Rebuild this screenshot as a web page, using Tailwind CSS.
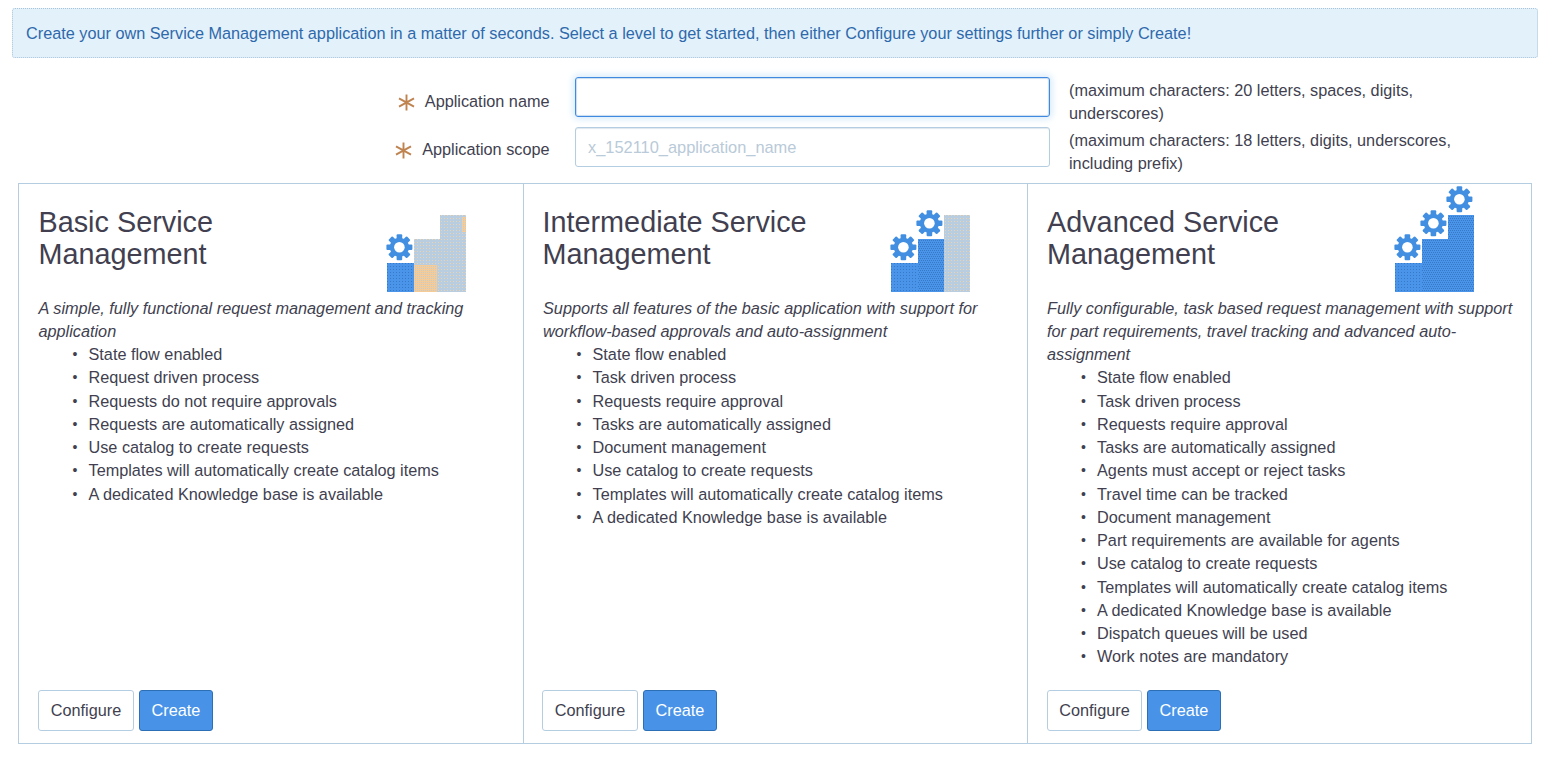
<!DOCTYPE html>
<html lang="en">
<head>
<meta charset="utf-8">
<title>Create Service Management Application</title>
<script src="https://cdn.jsdelivr.net/npm/@tailwindcss/browser@4"></script>
</head>
<body class="h-[759px] overflow-hidden bg-white pt-2 font-['Liberation_Sans',Arial,sans-serif] text-[16.25px] leading-[23.25px] text-[#413f50]">
<svg class="absolute size-0">
  <defs>
    <pattern id="blue" width="3" height="3" patternUnits="userSpaceOnUse"><rect width="3" height="3" fill="#4a94e9"/><rect x="1" y="1" width="1" height="1" fill="#3679c6"/></pattern>
    <pattern id="blue2" width="2" height="4" patternUnits="userSpaceOnUse"><rect width="2" height="4" fill="#4a94e9"/><rect width="1" height="1" fill="#3679c6"/><rect x="1" y="2" width="1" height="1" fill="#3679c6"/></pattern>
    <pattern id="gray" width="3" height="3" patternUnits="userSpaceOnUse"><rect width="3" height="3" fill="#b8cee0"/><rect x="1" y="1" width="1" height="1" fill="#e8d3b4"/></pattern>
    <pattern id="tan" width="2" height="2" patternUnits="userSpaceOnUse"><rect width="2" height="2" fill="#f6cb96"/><rect width="1" height="1" fill="#c8ccc8"/></pattern>
    <g id="gear">
      <g fill="#428fe2">
        <rect id="tooth" x="-2.8" y="-13" width="5.6" height="26" rx="1"/>
        <use href="#tooth" transform="rotate(45)"/>
        <use href="#tooth" transform="rotate(90)"/>
        <use href="#tooth" transform="rotate(135)"/>
        <circle r="9.6"/>
      </g>
      <circle r="5.3" fill="#fff"/>
    </g>
  </defs>
</svg>

<div class="mr-[7px] ml-3 flex h-[50px] items-center rounded-[3px] border border-dotted border-[#a9c3da] bg-[#e3f1fb] pt-[2px] pl-[13px] text-[#2e69ab]">Create your own Service Management application in a matter of seconds. Select a level to get started, then either Configure your settings further or simply Create!</div>

<form class="mt-[19px] flex flex-col gap-[10px]">
  <div class="flex h-10">
    <label class="mt-[13px] flex h-6 w-[549.5px] items-center justify-end gap-[10px]">
      <svg class="size-[17px]" viewBox="-8.5 -8.5 17 17" stroke="#bf8350" stroke-width="1.9"><path d="M0-8V8M-7.5-4.2L7.5 4.2M-7.5 4.2L7.5-4.2"/></svg>Application name
    </label>
    <input class="ml-[25.5px] h-10 w-[475px] rounded-[3px] border border-[#3f8ae0] px-3 shadow-[0_0_7px_2px_#d5eafa,inset_0_0_1px_1px_#c9ddef] outline-none">
    <p class="ml-[19px] mt-[2px] w-[400px]">(maximum characters: 20 letters, spaces, digits, underscores)</p>
  </div>
  <div class="flex h-10">
    <label class="mt-[11px] flex h-6 w-[549.5px] items-center justify-end gap-[10px]">
      <svg class="size-[17px]" viewBox="-8.5 -8.5 17 17" stroke="#bf8350" stroke-width="1.9"><path d="M0-8V8M-7.5-4.2L7.5 4.2M-7.5 4.2L7.5-4.2"/></svg>Application scope
    </label>
    <input placeholder="x_152110_application_name" class="ml-[25.5px] h-10 w-[475px] rounded-[3px] border border-[#b5cde0] px-3 text-[16.4px] shadow-[inset_0_1px_1px_#dfe8ee] outline-none placeholder:text-[#b9cad8]">
    <p class="ml-[19px] mt-[2px] w-[400px]">(maximum characters: 18 letters, digits, underscores, including prefix)</p>
  </div>
</form>

<main class="mt-4 ml-[18px] grid h-[561px] w-[1514px] grid-cols-[505px_504px_1fr] border border-[#b5cde0]">
  <section class="flex flex-col border-r border-[#b5cde0] pr-[14px] pb-3 pl-[19px]">
    <header class="flex h-[109px] justify-between pr-[42px]">
      <h2 class="pt-[22px] pl-[0.5px] text-[28.8px] leading-8">Basic Service<br>Management</h2>
      <svg class="h-[109px] w-[84px]" viewBox="0 0 84 109">
        <path fill="url(#blue)" d="M4 79h27v29H4z"/><path fill="url(#gray)" d="M31 55h26V31h26v77H31z"/><path fill="url(#tan)" d="M31 81h23v27H31zM79 33h4v15h-4z"/>
        <use href="#gear" x="16.4" y="63.3"/>
      </svg>
    </header>
    <p class="mt-[3.5px] pl-[0.5px] italic">A simple, fully functional request management and tracking application</p>
    <ul class="list-none pl-[34.5px] [&>li]:flex [&>li]:before:w-4 [&>li]:before:text-[14px] [&>li]:before:content-['•']">
      <li>State flow enabled</li><li>Request driven process</li><li>Requests do not require approvals</li><li>Requests are automatically assigned</li><li>Use catalog to create requests</li><li>Templates will automatically create catalog items</li><li>A dedicated Knowledge base is available</li>
    </ul>
    <div class="mt-auto flex gap-[5px]"><button type="button" class="h-[41px] w-24 rounded-[3px] border border-[#b5cde0]">Configure</button><button type="button" class="h-[41px] w-[74px] rounded-[3px] border border-[#2d6fb5] bg-[#4893e8] text-white">Create</button></div>
  </section>

  <section class="flex flex-col border-r border-[#b5cde0] pr-[14px] pb-3 pl-[18px]">
    <header class="flex h-[109px] justify-between pr-[42px]">
      <h2 class="pt-[22px] pl-[0.5px] text-[28.8px] leading-8">Intermediate Service<br>Management</h2>
      <svg class="h-[109px] w-[84px]" viewBox="0 0 84 109">
        <path fill="url(#blue)" d="M4 79h27v29H4z"/><path fill="url(#blue2)" d="M31 55h26v53H31z"/><path fill="url(#gray)" d="M57 31h26v77H57z"/>
        <use href="#gear" x="16.4" y="63.3"/><use href="#gear" x="42.4" y="39.3"/>
      </svg>
    </header>
    <p class="mt-[3.5px] pl-px italic">Supports all features of the basic application with support for workflow-based approvals and auto-assignment</p>
    <ul class="list-none pl-[34.5px] [&>li]:flex [&>li]:before:w-4 [&>li]:before:text-[14px] [&>li]:before:content-['•']">
      <li>State flow enabled</li><li>Task driven process</li><li>Requests require approval</li><li>Tasks are automatically assigned</li><li>Document management</li><li>Use catalog to create requests</li><li>Templates will automatically create catalog items</li><li>A dedicated Knowledge base is available</li>
    </ul>
    <div class="mt-auto flex gap-[5px]"><button type="button" class="h-[41px] w-24 rounded-[3px] border border-[#b5cde0]">Configure</button><button type="button" class="h-[41px] w-[74px] rounded-[3px] border border-[#2d6fb5] bg-[#4893e8] text-white">Create</button></div>
  </section>

  <section class="flex flex-col pr-[14px] pb-3 pl-[19px]">
    <header class="flex h-[109px] justify-between pr-[42px]">
      <h2 class="pt-[22px] text-[28.8px] leading-8">Advanced Service<br>Management</h2>
      <svg class="h-[109px] w-[84px]" viewBox="0 0 84 109">
        <path fill="url(#blue)" d="M4 79h27v29H4z"/><path fill="url(#blue2)" d="M31 55h26V31h26v77H31z"/>
        <use href="#gear" x="16.4" y="63.3"/><use href="#gear" x="42.4" y="39.3"/><use href="#gear" x="68.4" y="15.3"/>
      </svg>
    </header>
    <p class="mt-[3.5px] italic">Fully configurable, task based request management with support for part requirements, travel tracking and advanced auto-assignment</p>
    <ul class="list-none pl-[34px] [&>li]:flex [&>li]:before:w-4 [&>li]:before:text-[14px] [&>li]:before:content-['•']">
      <li>State flow enabled</li><li>Task driven process</li><li>Requests require approval</li><li>Tasks are automatically assigned</li><li>Agents must accept or reject tasks</li><li>Travel time can be tracked</li><li>Document management</li><li>Part requirements are available for agents</li><li>Use catalog to create requests</li><li>Templates will automatically create catalog items</li><li>A dedicated Knowledge base is available</li><li>Dispatch queues will be used</li><li>Work notes are mandatory</li>
    </ul>
    <div class="mt-auto flex gap-[5px]"><button type="button" class="h-[41px] w-[95px] rounded-[3px] border border-[#b5cde0]">Configure</button><button type="button" class="h-[41px] w-[74px] rounded-[3px] border border-[#2d6fb5] bg-[#4893e8] text-white">Create</button></div>
  </section>
</main>
</body>
</html>
